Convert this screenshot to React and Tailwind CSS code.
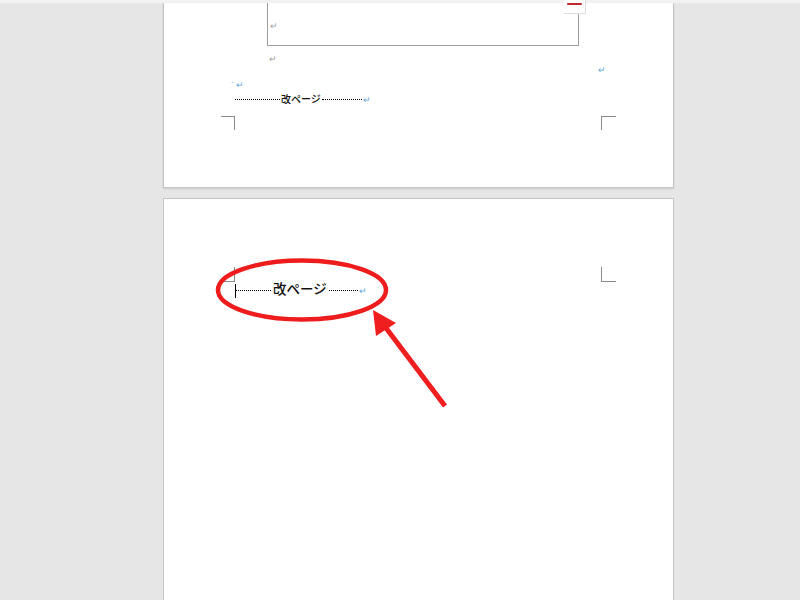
import React from 'react';

const jp = { fontFamily: '"Noto Sans CJK JP", "Noto Sans", sans-serif' };

function Ret({ blue, className = '' }) {
    return (
        <span className={`text-[9px] leading-none ${blue ? 'text-[#5fa6dc]' : 'text-[#a0a0a0]'} ${className}`} style={jp}>↵</span>
    );
}

function PageBreak({ small }) {
    return (
        <div className="flex items-center">
            <div className={`${small ? 'w-[45px]' : 'w-[35px]'} border-b border-dotted border-black`}></div>
            <span className={`${small ? 'text-[10px] font-medium px-[1px]' : 'text-[13.5px] font-medium px-[2px] -mt-[3px]'} text-[#111] leading-none`} style={jp}>改ページ</span>
            <div className={`${small ? 'w-[40px]' : 'w-[29px]'} border-b border-dotted border-black`}></div>
            <Ret blue className="ml-[1px]" />
        </div>
    );
}

export default function App() {
    return (
        <div className="relative w-[800px] h-[600px] overflow-hidden bg-[#e6e6e6] flex flex-col">
            <div className="h-[3px] bg-[#f2f2f2] shrink-0"></div>

            {/* Page 1 (bottom part) */}
            <div className="ml-[163px] w-[511px] h-[185px] shrink-0 bg-white border border-t-0 border-[#c4c4c4] shadow-[0_1px_2px_rgba(0,0,0,0.12)] relative">
                {/* text frame */}
                <div className="ml-[103px] w-[312px] h-[43px] border-l border-b border-r border-[#9e9e9e] relative">
                    <div className="pt-[8px] pl-[2px]"><Ret /></div>
                    <div className="absolute -top-[3px] -right-[8px] w-[22px] h-[14px] bg-white border-r border-b border-[#dcdcdc] flex justify-center pt-[3px]">
                        <div className="w-[15px] h-[2px] bg-[#c0282f] rounded-sm"></div>
                    </div>
                </div>
                <div className="ml-[105px] mt-[8px] h-[8px] flex items-center"><Ret /></div>
                <div className="mt-[3px] h-[9px] flex items-center justify-end pr-[67px]"><Ret blue /></div>
                <div className="mt-[6px] ml-[67px] h-[8px] flex items-center gap-[2px]">
                    <span className="text-[7px] leading-none text-[#8ab8e6]">ˇ</span>
                    <Ret blue />
                </div>
                <div className="mt-[6px] ml-[71px]"><PageBreak small /></div>
                {/* crop marks */}
                <div className="mt-[12px] flex justify-between pl-[57px] pr-[57px]">
                    <div className="w-[14px] h-[14px] border-t border-r border-[#8a8a8a]"></div>
                    <div className="w-[15px] h-[14px] border-t border-l border-[#8a8a8a]"></div>
                </div>
            </div>

            {/* Page 2 */}
            <div className="ml-[163px] mt-[10px] w-[511px] flex-1 bg-white border border-b-0 border-[#c4c4c4]">
                <div className="mt-[68px] flex justify-between pl-[58px] pr-[57px]">
                    <div className="w-[13px] h-[15px] border-b border-r border-[#8a8a8a]"></div>
                    <div className="w-[15px] h-[15px] border-b border-l border-[#8a8a8a]"></div>
                </div>
                <div className="ml-[71px] mt-[1px] flex items-center h-[15px]">
                    <div className="w-[1px] h-[14px] bg-black"></div>
                    <PageBreak />
                </div>
            </div>

            {/* annotation overlay */}
            <svg className="absolute inset-0 pointer-events-none" width="800" height="600" viewBox="0 0 800 600">
                <ellipse cx="302" cy="290" rx="84" ry="29.5" fill="none" stroke="#ee1c1c" strokeWidth="4.5" />
                <line x1="445" y1="406" x2="383" y2="324" stroke="#f01e1e" strokeWidth="5" strokeLinecap="butt" />
                <polygon points="373,310 396,323 376,336" fill="#f01e1e" />
            </svg>
        </div>
    );
}
